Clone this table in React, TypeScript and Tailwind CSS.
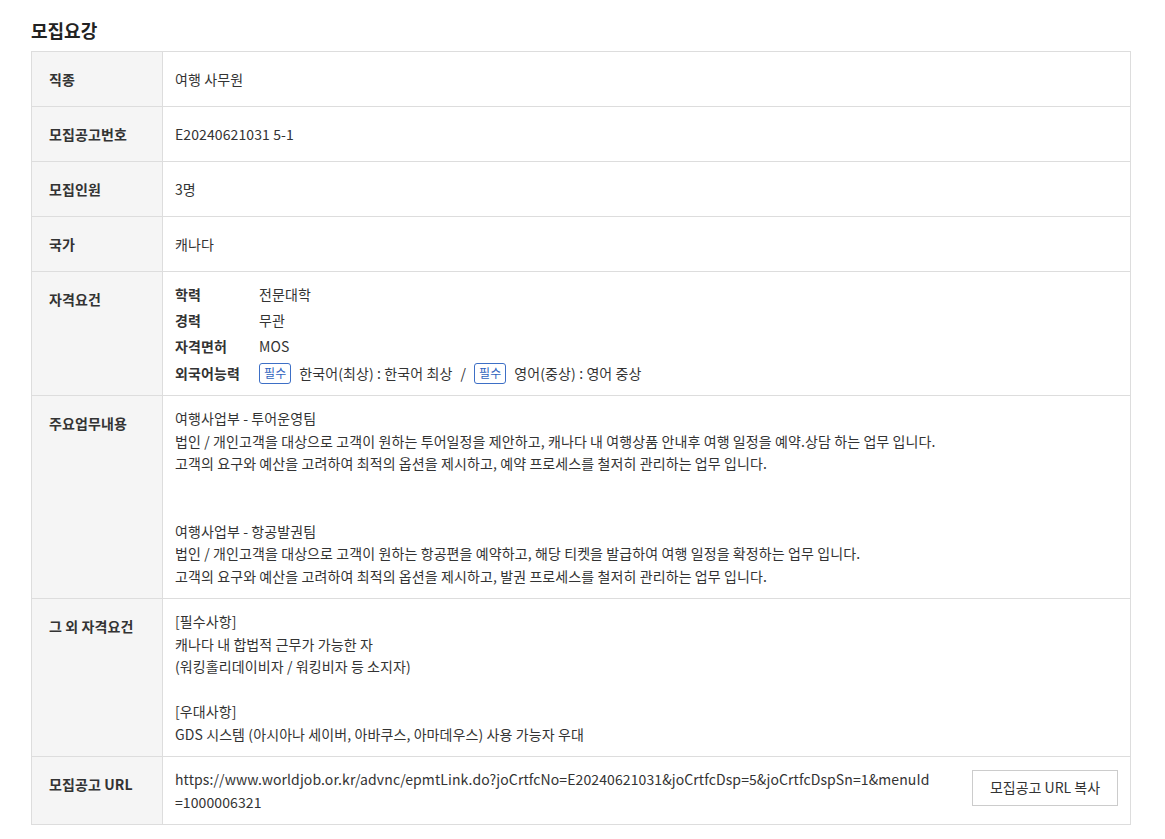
import React from 'react'

const Badge = () => (
  <span className="inline-flex items-center justify-center h-[21px] px-[4px] border border-[#3d6fc6] rounded-[3px] text-[12px] text-[#2f63bd] leading-none mr-[8px]">필수</span>
)

const Row = ({ label, children, className = '' }: { label: string; children: React.ReactNode; className?: string }) => (
  <div className="flex border-b border-[#dddddd] last:border-b-0">
    <div className="w-[131px] shrink-0 bg-[#f5f5f5] border-r border-[#dddddd] pl-[17px] pt-[16px] pb-[16px] font-bold text-[#333] leading-[22px]">
      {label}
    </div>
    <div className={'flex-1 flex flex-col justify-center px-[12px] py-[11px] text-[#333] leading-[22.5px] ' + className}>
      {children}
    </div>
  </div>
)

const App = () => {
  const quals: [string, React.ReactNode][] = [
    ['학력', '전문대학'],
    ['경력', '무관'],
    ['자격면허', 'MOS'],
    [
      '외국어능력',
      <span className="flex items-center">
        <Badge />
        <span>한국어(최상) : 한국어 최상</span>
        <span className="mx-[8px]">/</span>
        <Badge />
        <span>영어(중상) : 영어 중상</span>
      </span>,
    ],
  ]

  return (
    <div className="bg-white min-h-[839px] px-[31px] pt-[17px] text-[14px] tracking-[0.1px]" style={{ fontFamily: '"Noto Sans CJK KR", "Noto Sans", sans-serif' }}>
      <h2 className="text-[18px] font-bold text-[#222] leading-[26px] mb-[8px] tracking-normal">모집요강</h2>
      <div className="w-[1100px] border border-[#dddddd]">
        <Row label="직종">여행 사무원</Row>
        <Row label="모집공고번호">E20240621031 5-1</Row>
        <Row label="모집인원">3명</Row>
        <Row label="국가">캐나다</Row>
        <Row label="자격요건" className="!py-[9px]">
          {quals.map(([k, v]) => (
            <div key={k} className="flex items-center h-[26.3px]">
              <span className="w-[84px] shrink-0 font-bold">{k}</span>
              {v}
            </div>
          ))}
        </Row>
        <Row label="주요업무내용">
          <p>여행사업부 - 투어운영팀</p>
          <p>법인 / 개인고객을 대상으로 고객이 원하는 투어일정을 제안하고, 캐나다 내 여행상품 안내후 여행 일정을 예약.상담 하는 업무 입니다.</p>
          <p>고객의 요구와 예산을 고려하여 최적의 옵션을 제시하고, 예약 프로세스를 철저히 관리하는 업무 입니다.</p>
          <p>&nbsp;</p>
          <p>&nbsp;</p>
          <p>여행사업부 - 항공발권팀</p>
          <p>법인 / 개인고객을 대상으로 고객이 원하는 항공편을 예약하고, 해당 티켓을 발급하여 여행 일정을 확정하는 업무 입니다.</p>
          <p>고객의 요구와 예산을 고려하여 최적의 옵션을 제시하고, 발권 프로세스를 철저히 관리하는 업무 입니다.</p>
        </Row>
        <Row label="그 외 자격요건">
          <p>[필수사항]</p>
          <p>캐나다 내 합법적 근무가 가능한 자</p>
          <p>(워킹홀리데이비자 / 워킹비자 등 소지자)</p>
          <p>&nbsp;</p>
          <p>[우대사항]</p>
          <p>GDS 시스템 (아시아나 세이버, 아바쿠스, 아마데우스) 사용 가능자 우대</p>
        </Row>
        <Row label="모집공고 URL">
          <div className="flex items-center justify-between">
            <p className="w-[780px]">
              https://www.worldjob.or.kr/advnc/epmtLink.do?joCrtfcNo=E20240621031&amp;joCrtfcDsp=5&amp;joCrtfcDspSn=1&amp;menuId
              <br />
              =1000006321
            </p>
            <button className="w-[146px] h-[36px] mb-[6px] border border-[#cccccc] bg-white text-[#333] text-[14px] tracking-normal">모집공고 URL 복사</button>
          </div>
        </Row>
      </div>
    </div>
  )
}

export default App
